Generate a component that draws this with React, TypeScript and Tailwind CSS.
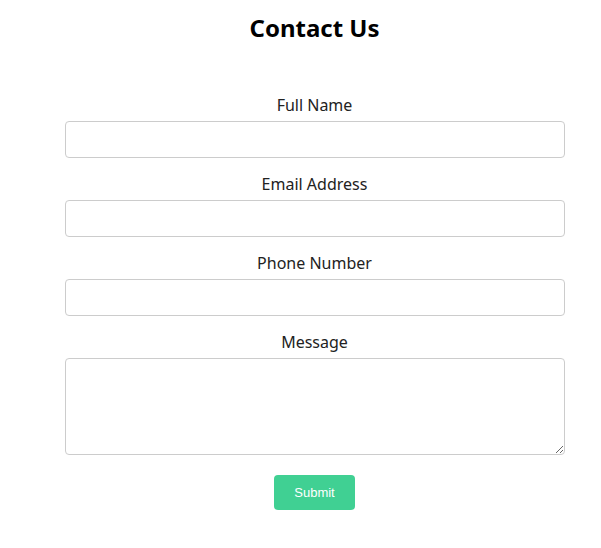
import React from "react";

const fields = [
  { label: "Full Name", type: "text" },
  { label: "Email Address", type: "email" },
  { label: "Phone Number", type: "tel" },
];

export default function App() {
  return (
    <div className="w-[601px] h-[548px] bg-white" style={{ fontFamily: '"Noto Sans", "Open Sans", sans-serif' }}>
      <div className="w-[500px] ml-[65px] pt-[12px] flex flex-col">
        <h2 className="text-[24px] leading-[32px] font-bold text-black text-center pr-[1px]">Contact Us</h2>
        <div className="mt-[49px] flex flex-col">
          {fields.map((f) => (
            <div key={f.label} className="flex flex-col mb-[14px]">
              <label className="text-[16px] leading-[24px] text-[#222] text-center pr-[1px]">{f.label}</label>
              <input type={f.type} className="mt-[4px] h-[37px] w-full border border-[#cccccc] rounded-[4px] px-2 outline-none" />
            </div>
          ))}
          <div className="flex flex-col">
            <label className="text-[16px] leading-[24px] text-[#222] text-center pr-[1px]">Message</label>
            <textarea className="mt-[4px] h-[97px] w-full border border-[#cccccc] rounded-[4px] px-2 outline-none" />
          </div>
          <div className="flex justify-center mt-[20px] pr-[1px]">
            <button
              className="w-[81px] h-[35px] rounded-[4px] bg-[#40d093] text-white text-[13px]"
              style={{ fontFamily: '"Liberation Sans", Arial, sans-serif' }}
            >
              Submit
            </button>
          </div>
        </div>
      </div>
    </div>
  );
}
